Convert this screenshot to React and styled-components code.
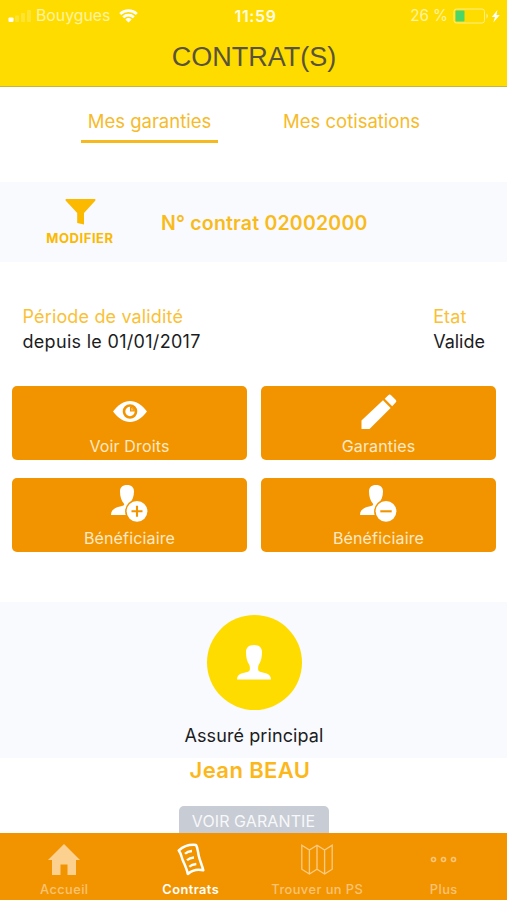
import React from "react";
import styled, { createGlobalStyle } from "styled-components";

const GlobalStyle = createGlobalStyle`
  * {
    box-sizing: border-box;
  }
  body {
    margin: 0;
    background: #fff;
    font-family: Inter, "Liberation Sans", sans-serif;
  }
`;

const Screen = styled.div`
  display: flex;
  flex-direction: column;
  width: 507px;
  height: 900px;
  overflow: hidden;
  background: #fff;
`;

const Header = styled.header`
  flex: none;
  height: 87px;
  background: #ffdc00;
  border-bottom: 1px solid #c9b53c;
`;

const StatusBar = styled.div`
  display: grid;
  grid-template-columns: 1fr auto 1fr;
  align-items: center;
  height: 30px;
  padding: 0 6px 0 8px;
  color: #fffbe0;
  font-size: 16px;
  line-height: 30px;
`;

const StatusGroup = styled.div`
  display: flex;
  align-items: center;
  justify-content: ${(props) => (props.$end ? "flex-end" : "flex-start")};
`;

const Carrier = styled.span`
  margin: 0 9px 0 5px;
  color: #fff3a0;
  font-size: 15.8px;
  line-height: 32px;
`;

const Clock = styled.span`
  margin-left: 2px;
  font-weight: 600;
  letter-spacing: 0.6px;
`;

const Percent = styled.span`
  margin-right: 5px;
  color: #fff3a0;
  font-size: 15.2px;
  line-height: 32px;
`;

const Title = styled.h1`
  margin: 0;
  padding: 1px 0 0 1px;
  color: #59533a;
  font-family: "Liberation Sans", Arial, sans-serif;
  font-size: 27px;
  font-weight: 400;
  line-height: 52px;
  text-align: center;
`;

const Tabs = styled.nav`
  display: flex;
  flex: none;
  gap: 65px;
  height: 95px;
  padding: 17px 0 0 81px;
`;

const Tab = styled.a`
  width: 137px;
  height: 39px;
  border-bottom: 3px solid ${(props) => (props.$active ? "#f6b91f" : "transparent")};
  color: #f6bb2b;
  font-size: 18.5px;
  line-height: 34px;
  text-align: center;
  white-space: nowrap;
`;

const ContractBand = styled.section`
  display: flex;
  flex: none;
  align-items: center;
  height: 80px;
  background: #f8fafe;
`;

const FilterButton = styled.div`
  display: flex;
  flex-direction: column;
  align-items: center;
  width: 160px;
  height: 65px;
  padding-top: 9px;
  color: #fbb900;
  font-size: 13px;
  font-weight: 700;
  letter-spacing: 0.55px;
  line-height: 27px;
`;

const ContractNumber = styled.div`
  margin-left: 1px;
  padding-top: 1px;
  color: #f9bb1c;
  font-size: 19.5px;
  font-weight: 600;
  letter-spacing: 0.2px;
  white-space: nowrap;
`;

const Infos = styled.section`
  display: flex;
  flex: none;
  justify-content: space-between;
  height: 124px;
  padding: 43px 22px 0 22.5px;
  font-size: 18px;
  line-height: 24px;
  white-space: nowrap;
`;

const InfoLabel = styled.div`
  color: #fac137;
  letter-spacing: 0.15px;
`;

const InfoValue = styled.div`
  color: #1c1c1e;
  line-height: 25px;
  letter-spacing: ${(props) => (props.$wide ? "0.3px" : "0")};
`;

const Actions = styled.section`
  display: grid;
  flex: none;
  grid-template-columns: 1fr 1fr;
  gap: 17.5px 14px;
  height: 216px;
  padding: 0 11px 0 12px;
  align-content: start;
`;

const Action = styled.div`
  display: flex;
  flex-direction: column;
  align-items: center;
  height: 74px;
  border-radius: 5px;
  background: #f29400;
  color: #fde9c6;
  font-size: 16px;
  letter-spacing: 0.15px;
  line-height: 20px;
`;

const ActionIcon = styled.div`
  display: flex;
  align-items: center;
  justify-content: center;
  height: 50px;
  padding-top: 2px;
`;

const Insured = styled.section`
  display: flex;
  flex: none;
  flex-direction: column;
  align-items: center;
  height: 156px;
  padding: 13px 0 0 1px;
  background: #f8fafe;
  color: #1c1c1e;
  font-size: 18px;
  letter-spacing: 0.1px;
  line-height: 24px;
`;

const Avatar = styled.div`
  display: flex;
  align-items: center;
  justify-content: center;
  width: 95px;
  height: 95px;
  margin-bottom: 14px;
  border-radius: 50%;
  background: #ffdc00;
`;

const Person = styled.section`
  display: flex;
  flex: 1;
  min-height: 0;
  overflow: hidden;
  flex-direction: column;
  align-items: center;
`;

const PersonName = styled.div`
  margin-right: 7px;
  color: #fcb71b;
  font-size: 22px;
  font-weight: 600;
  letter-spacing: 0.4px;
  line-height: 24px;
`;

const GuaranteeButton = styled.div`
  flex: none;
  width: 150px;
  height: 40px;
  margin-top: 24px;
  border-radius: 5px;
  background: #c8ccd4;
  color: #f7f8fa;
  font-size: 16px;
  letter-spacing: 0.1px;
  line-height: 31px;
  text-align: center;
`;

const TabBar = styled.nav`
  display: grid;
  flex: none;
  grid-template-columns: repeat(4, 1fr);
  height: 67px;
  padding-left: 1px;
  background: #f29400;
`;

const TabItem = styled.a`
  display: flex;
  flex-direction: column;
  align-items: center;
  color: ${(props) => (props.$active ? "#fff" : "#f9c374")};
  font-size: 12.8px;
  font-weight: ${(props) => (props.$active ? 600 : 500)};
  letter-spacing: 0.45px;
  line-height: 14px;
`;

const TabIcon = styled.div`
  display: flex;
  align-items: center;
  height: 50px;
  padding-top: 3px;
`;

const Signal = () => (
  <svg width="23" height="14" fill="#fff">
    <rect x="0.5" y="8.5" width="5" height="4.5" rx="1" />
    <rect x="7" y="6.5" width="4" height="6.5" rx="1" opacity=".2" />
    <rect x="13" y="4" width="4" height="9" rx="1" opacity=".2" />
    <rect x="19" y="1" width="4" height="12" rx="1" opacity=".2" />
  </svg>
);

const Wifi = () => (
  <svg width="19" height="14" viewBox="0 0 19 14" fill="none" stroke="#fff" strokeWidth="2.7">
    <path d="M1.2 5a12 12 0 0 1 16.6 0M4.2 8.3a7.7 7.7 0 0 1 10.6 0" />
    <path d="M9.5 13.6 6.4 10.4a4.5 4.5 0 0 1 6.2 0z" fill="#fff" stroke="none" />
  </svg>
);

const Battery = () => (
  <svg width="48" height="16" viewBox="0 0 48 16">
    <rect x="1" y="1" width="30.5" height="14" rx="2.5" fill="none" stroke="#ffef85" strokeWidth="1" />
    <rect x="2.5" y="2.5" width="9" height="11" rx="1" fill="#4cd667" />
    <path d="M33.5 5.5q3 2.5 0 5z" fill="#ffef85" />
    <path d="M44.5 2 38.8 9H42l-1.7 5.5L46.8 7h-3.4z" fill="#fff" />
  </svg>
);

const Funnel = () => (
  <svg width="31" height="26" viewBox="0 0 31 26" fill="#fbb900">
    <path d="M1.2 0h28.6q1.2 0 .6 1.5L19 14v11.5L12.2 24V14L.6 1.5Q0 0 1.2 0z" />
  </svg>
);

const Eye = () => (
  <svg width="34" height="23" viewBox="0 0 34 23">
    <path d="M0 10.500C5 4 11 0 17 0s12 4 17 10.500C29 17 23 21 17 21S5 17 0 10.500z" fill="#fff" />
    <circle cx="17" cy="10.500" r="6" fill="#fff" stroke="#f29400" strokeWidth="2.600" />
    <path d="M17 5.500V10.400h5A5.500 5.500 0 0 0 17 5.500z" fill="#f29400" />
    <path d="M18 6.800q2.500.4 2.700 2.700H18z" fill="#fff" opacity=".35" />
  </svg>
);

const Pencil = () => (
  <svg width="36" height="36" viewBox="0 0 36 36" fill="#fff">
    <path d="M.5 35v-8.500L22 6.300l7.600 7.600L8.500 35z" />
    <path d="M23.7 4.800 27.300 1.300q1.400-1.400 2.800 0l4.500 4.500q1.400 1.400 0 2.800L31.200 12.200z" />
  </svg>
);

const PersonWithBadge = ({ minus }) => (
  <svg width="37" height="37" viewBox="0 0 37 37">
    <path
      d="M16 0c4.700 0 7 2.500 7 6.500 0 5-1.600 9.300-4.600 12v3l6 3V30H0c0-5 3.500-7 8-8.200 3-.8 5.200-.9 5.200-2.800C10.400 16.300 9 11.500 9 6.500 9 2.500 11.300 0 16 0z"
      fill="#fff"
    />
    <circle cx="26" cy="26.3" r="11.9" fill="#f29400" />
    <circle cx="26" cy="26.3" r="10.4" fill="#fff" />
    <path d={minus ? "M20.3 26.3h11.4" : "M20.5 26.3h11M26 20.8v11"} stroke="#f29400" strokeWidth="2.100" />
  </svg>
);

const Bust = () => (
  <svg width="34" height="35" viewBox="0 0 34 35" fill="#fff">
    <path d="M17 0c5.500 0 8 2.800 8 7 0 5.500-1 9.500-3.400 13-.6 1.500-.8 5 .2 6 2.500 2.200 12.200 1 12.200 8.500H0C0 27 9.700 28.200 12.200 26c1-1 .8-4.500.2-6C10 16.500 9 12.500 9 7c0-4.200 2.500-7 8-7z" />
  </svg>
);

const House = () => (
  <svg width="32" height="31" viewBox="0 0 32 31" fill="#fcd08e">
    <path d="M16 0 32 16h-4v15h-8.500V20.500h-7V31H4V16H0z" />
  </svg>
);

const Contract = () => (
  <svg width="28" height="33" viewBox="0 0 28 33" fill="none" stroke="#fff" strokeWidth="2.5">
    <path
      d="M1.8 7.500Q9 1 19 2C21 5 20.800 9 21.800 13 22.800 17.500 25 22 26.300 27.200Q17 25.200 10.800 31C9.800 25.500 7 20.500 5.500 16.500 4.300 13 4 10.500 1.800 7.500z"
      strokeLinejoin="round"
    />
    <path d="M8 10.800Q10.500 8.300 15 8M10 17.300Q12.500 14.800 17 14.500M12.300 23.800Q14.800 21.300 19.300 21" strokeWidth="2.3" />
  </svg>
);

const MapIcon = () => (
  <svg width="32" height="31" viewBox="0 0 32 31" fill="none" stroke="#fbcb83" strokeWidth="1.3">
    <path d="M.8 1.200 8.400 6 16 1.200 23.600 6l7.600-4.800v24L23.600 30 16 25.200 8.400 30 .8 25.200zM8.400 6v24M16 1.200v24M23.600 6v24" />
  </svg>
);

const Dots = () => (
  <svg width="28" height="8" viewBox="0 0 28 8" fill="none" stroke="#fac67a" strokeWidth="1.6">
    <circle cx="3.500" cy="3.500" r="2" />
    <circle cx="13.500" cy="3.500" r="2" />
    <circle cx="23.500" cy="3.500" r="2" />
  </svg>
);

const actions = [
  { label: "Voir Droits", icon: <Eye /> },
  { label: "Garanties", icon: <Pencil /> },
  { label: "Bénéficiaire", icon: <PersonWithBadge /> },
  { label: "Bénéficiaire", icon: <PersonWithBadge minus /> },
];

const tabItems = [
  { label: "Accueil", icon: <House /> },
  { label: "Contrats", icon: <Contract />, active: true },
  { label: "Trouver un PS", icon: <MapIcon /> },
  { label: "Plus", icon: <Dots /> },
];

const App = () => {
  return (
    <Screen>
      <GlobalStyle />
      <Header>
        <StatusBar>
          <StatusGroup>
            <Signal />
            <Carrier>Bouygues</Carrier>
            <Wifi />
          </StatusGroup>
          <Clock>11:59</Clock>
          <StatusGroup $end>
            <Percent>26 %</Percent>
            <Battery />
          </StatusGroup>
        </StatusBar>
        <Title>CONTRAT(S)</Title>
      </Header>
      <Tabs>
        <Tab $active>Mes garanties</Tab>
        <Tab>Mes cotisations</Tab>
      </Tabs>
      <ContractBand>
        <FilterButton>
          <Funnel />
          <span>MODIFIER</span>
        </FilterButton>
        <ContractNumber>N° contrat 02002000</ContractNumber>
      </ContractBand>
      <Infos>
        <div>
          <InfoLabel>Période de validité</InfoLabel>
          <InfoValue $wide>depuis le 01/01/2017</InfoValue>
        </div>
        <div>
          <InfoLabel>Etat</InfoLabel>
          <InfoValue>Valide</InfoValue>
        </div>
      </Infos>
      <Actions>
        {actions.map((action, i) => (
          <Action key={i}>
            <ActionIcon>{action.icon}</ActionIcon>
            {action.label}
          </Action>
        ))}
      </Actions>
      <Insured>
        <Avatar>
          <Bust />
        </Avatar>
        Assuré principal
      </Insured>
      <Person>
        <PersonName>Jean BEAU</PersonName>
        <GuaranteeButton>VOIR GARANTIE</GuaranteeButton>
      </Person>
      <TabBar>
        {tabItems.map((item) => (
          <TabItem key={item.label} $active={item.active}>
            <TabIcon>{item.icon}</TabIcon>
            {item.label}
          </TabItem>
        ))}
      </TabBar>
    </Screen>
  );
};

export default App;
